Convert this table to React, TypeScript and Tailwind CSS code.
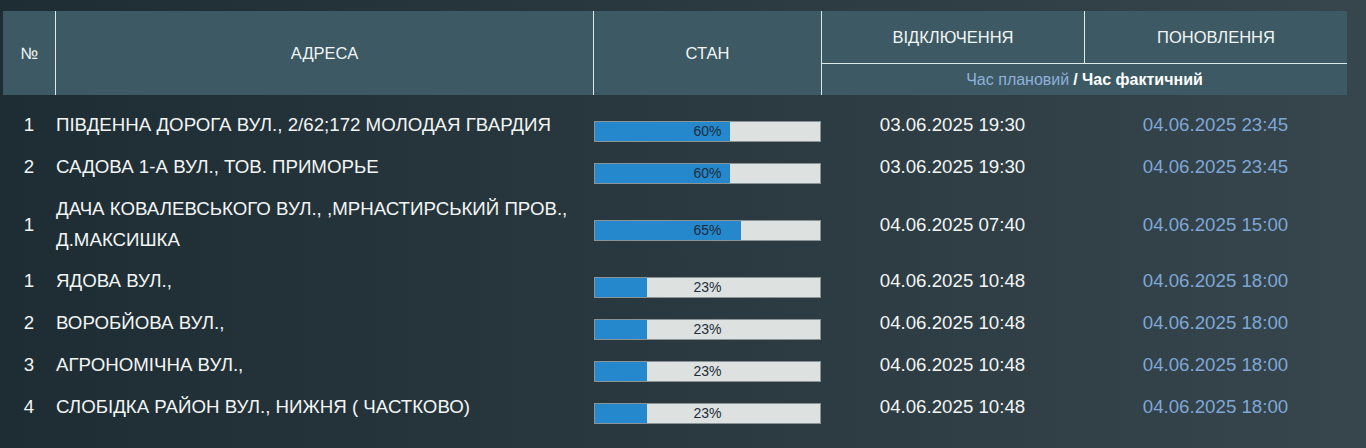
import React from 'react'

type Row = {
  n: string
  addr: React.ReactNode
  pct: number
  off: string
  on: string
  tall?: boolean
}

const rows: Row[] = [
  { n: '1', addr: 'ПІВДЕННА ДОРОГА ВУЛ., 2/62;172 МОЛОДАЯ ГВАРДИЯ', pct: 60, off: '03.06.2025 19:30', on: '04.06.2025 23:45' },
  { n: '2', addr: 'САДОВА 1-А ВУЛ., ТОВ. ПРИМОРЬЕ', pct: 60, off: '03.06.2025 19:30', on: '04.06.2025 23:45' },
  {
    n: '1',
    addr: (
      <>
        ДАЧА КОВАЛЕВСЬКОГО ВУЛ., ,МРНАСТИРСЬКИЙ ПРОВ.,
        <br />
        Д.МАКСИШКА
      </>
    ),
    pct: 65,
    off: '04.06.2025 07:40',
    on: '04.06.2025 15:00',
    tall: true,
  },
  { n: '1', addr: 'ЯДОВА ВУЛ.,', pct: 23, off: '04.06.2025 10:48', on: '04.06.2025 18:00' },
  { n: '2', addr: 'ВОРОБЙОВА ВУЛ.,', pct: 23, off: '04.06.2025 10:48', on: '04.06.2025 18:00' },
  { n: '3', addr: 'АГРОНОМІЧНА ВУЛ.,', pct: 23, off: '04.06.2025 10:48', on: '04.06.2025 18:00' },
  { n: '4', addr: 'СЛОБІДКА РАЙОН ВУЛ., НИЖНЯ ( ЧАСТКОВО)', pct: 23, off: '04.06.2025 10:48', on: '04.06.2025 18:00' },
]

const Progress = ({ pct }: { pct: number }) => (
  <div className="relative ml-px h-[21px] w-[228px] translate-y-[6px] border border-[#8a9396] bg-[#dde1df]">
    <div className="h-full bg-[#2688cc]" style={{ width: `${pct}%` }} />
    <span className="absolute inset-0 flex items-center justify-center text-[14px] leading-none text-[#1c2d3a]">
      {pct}%
    </span>
  </div>
)

const App = () => {
  return (
    <div
      className="h-[448px] w-full overflow-hidden bg-gradient-to-r from-[#1e2d34] to-[#37464c] pt-[11px] pl-[3px] text-[#f2f5f4]"
      style={{ fontFamily: '"Liberation Sans", Arial, sans-serif' }}
    >
      {/* header */}
      <div className="grid w-[1344px] grid-cols-[52px_538px_228px_263px_263px] grid-rows-[52px_32px] bg-[#3d5a64] text-[16.5px]">
        <div className="row-span-2 flex items-center justify-center">№</div>
        <div className="row-span-2 flex items-center justify-center border-l border-[#dce9ea]">АДРЕСА</div>
        <div className="row-span-2 flex items-center justify-center border-l border-[#dce9ea]">СТАН</div>
        <div className="flex items-center justify-center border-l border-[#dce9ea]">ВІДКЛЮЧЕННЯ</div>
        <div className="flex items-center justify-center border-l border-[#dce9ea]">ПОНОВЛЕННЯ</div>
        <div className="col-span-2 flex items-center justify-center border-t border-l border-[#dce9ea] text-[16px]">
          <span className="text-[#8fb0da]">Час плановий</span>
          <span className="ml-1 font-bold text-white">/ Час фактичний</span>
        </div>
      </div>

      {/* body */}
      <div className="w-[1344px] pt-[9px] text-[18.7px]">
        {rows.map((r, i) => (
          <div
            key={i}
            className={`grid grid-cols-[52px_538px_228px_263px_263px] items-center py-[5px] ${r.tall ? 'leading-[31px]' : 'leading-[32px]'}`}
          >
            <div className="text-center">{r.n}</div>
            <div className="pl-px">{r.addr}</div>
            <div className="flex h-[21px] items-center">
              <Progress pct={r.pct} />
            </div>
            <div className="text-center">{r.off}</div>
            <div className="text-center text-[#7ea7d6]">{r.on}</div>
          </div>
        ))}
      </div>
    </div>
  )
}

export default App
